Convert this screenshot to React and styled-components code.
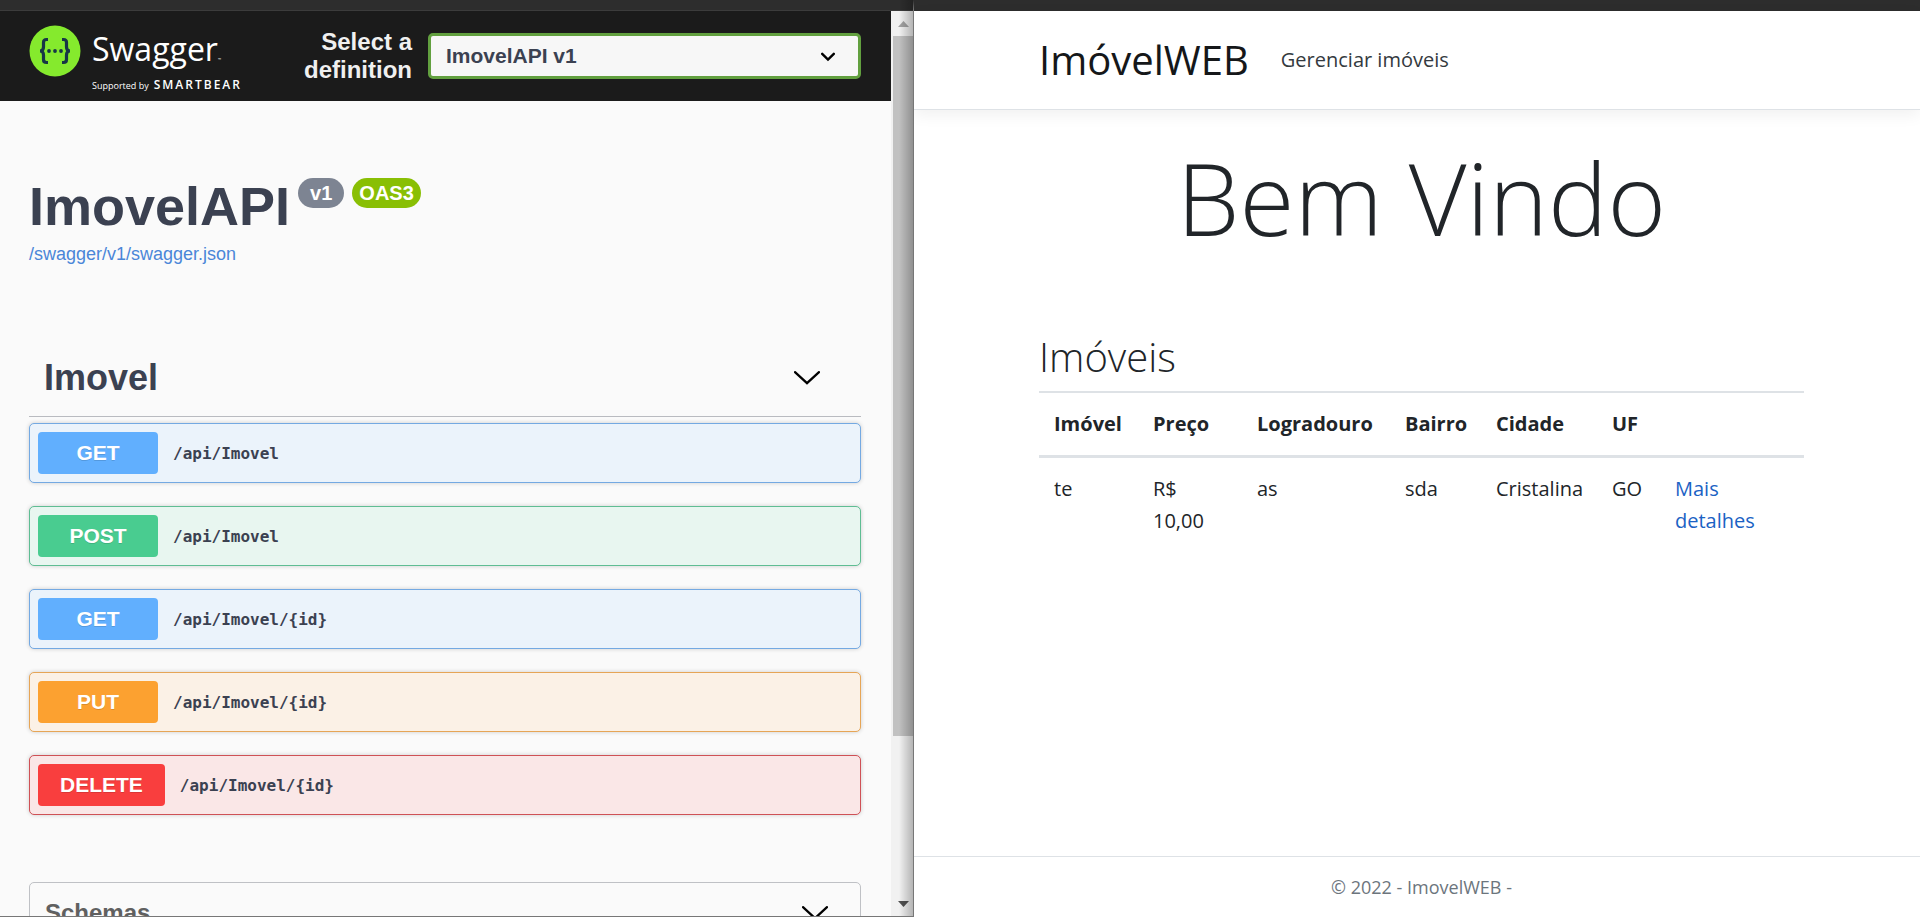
import React from "react";
import styled, { createGlobalStyle } from "styled-components";

const GlobalStyle = createGlobalStyle`
  * { box-sizing: border-box; }
  body { margin: 0; background: #fff; }
  button, select { font: inherit; color: inherit; }
`;

const sans = `"Liberation Sans", Arial, sans-serif`;
const humanist = `"Segoe UI", "Open Sans", "Noto Sans", sans-serif`;
const mono = `Consolas, "DejaVu Sans Mono", monospace`;

const Desktop = styled.div`
  display: grid;
  grid-template-columns: 914fr 1006fr;
  height: 100vh;
  overflow: hidden;
`;

const Window = styled.section`
  display: flex;
  flex-direction: column;
  min-width: 0;
  min-height: 0;
  border-top: ${(p) => p.$frame}px solid #2d2d2d;
`;

/* API window */

const ApiWindow = styled(Window)`
  position: relative;
  border-right: 1px solid #777;
  border-bottom: 1px solid #777;
  font-family: ${sans};
  color: #3b4151;

  &::after {
    content: "";
    position: absolute;
    inset: -10px 0 0 auto;
    width: 14px;
    background: linear-gradient(90deg, transparent, rgba(0, 0, 0, 0.25));
    pointer-events: none;
  }
`;

const ApiBody = styled.div`
  display: flex;
  flex: 1;
  min-height: 0;
  border-top: 1px solid #3c3c3c;
`;

const ApiPage = styled.main`
  flex: 1;
  min-width: 0;
  overflow: hidden;
  background: #fafafa;
`;

const Topbar = styled.header`
  display: flex;
  align-items: center;
  justify-content: space-between;
  height: 90px;
  padding: 0 30px 0 29px;
  background: #1b1b1b;
`;

const Brand = styled.a`
  display: flex;
  gap: 11px;
  color: #fff;
  text-decoration: none;
  font-family: "Open Sans", sans-serif;
`;

const BrandText = styled.span`
  display: flex;
  flex-direction: column;
  padding-top: 6px;
`;

const BrandName = styled.span`
  font-size: 32px;
  line-height: 36px;

  small { font-size: 4px; }
`;

const BrandBy = styled.span`
  display: flex;
  align-items: baseline;
  gap: 5px;
  font-size: 9px;
  line-height: 16px;
  height: 10px;

  strong {
    font-size: 12px;
    font-weight: 600;
    letter-spacing: 2px;
    line-height: 12px;
  }
`;

const Definition = styled.label`
  display: flex;
  align-items: center;
  gap: 16px;
  font-size: 24px;
  font-weight: 700;
  line-height: 28px;
  color: #f0f0f0;
  text-align: right;

  > span:first-child { width: 120px; }
`;

const SelectBox = styled.span`
  position: relative;
  width: 433px;

  svg {
    position: absolute;
    right: 26px;
    top: 19px;
    pointer-events: none;
  }
`;

const Select = styled.select`
  display: block;
  width: 100%;
  height: 46px;
  padding: 0 15px;
  border: 3px solid #62a03f;
  border-radius: 5px;
  background: #f7f7f7;
  appearance: none;
  font-size: 21px;
  font-weight: 700;
  color: #3b4151;
`;

const Info = styled.section`
  padding: 77px 29px 0;
`;

const TitleRow = styled.div`
  display: flex;
  align-items: flex-start;
  gap: 8px;
`;

const ApiTitle = styled.h1`
  margin: 0;
  padding-bottom: 6px;
  font-size: 54px;
  line-height: 56px;
`;

const Badge = styled.span`
  padding: 0 ${(p) => p.$pad}px;
  border-radius: 15px;
  background: ${(p) => p.$color};
  color: #fff;
  font-size: 20px;
  font-weight: 700;
  line-height: 30px;
`;

const SpecLink = styled.a`
  display: block;
  color: #4a86d8;
  font-size: 18px;
  line-height: 28px;
  text-decoration: none;
`;

const Operations = styled.section`
  padding: 71px 30px 0 29px;
`;

const TagHeading = styled.h2`
  margin: 0 0 6px;
  border-bottom: 1px solid #b9bbc0;
`;

const TagButton = styled.button`
  display: flex;
  align-items: center;
  justify-content: space-between;
  width: 100%;
  height: 77px;
  padding: 0 41px 0 15px;
  border: 0;
  background: none;
  font-size: 36px;
  font-weight: 700;
`;

const OperationList = styled.div`
  display: flex;
  flex-direction: column;
  gap: 23px;
`;

const palette = {
  GET: ["#61affe", "#ebf3fb", "#74a9e2"],
  POST: ["#49cc90", "#e8f6f0", "#5fbd93"],
  PUT: ["#fca130", "#fbf1e6", "#e6a556"],
  DELETE: ["#f93e3e", "#fae7e7", "#cf5156"],
};

const Operation = styled.button`
  display: flex;
  align-items: center;
  gap: 15px;
  height: 60px;
  padding: 0 8px;
  border: 1px solid ${(p) => palette[p.$method][2]};
  border-radius: 5px;
  background: ${(p) => palette[p.$method][1]};
  box-shadow: 0 0 4px rgba(0, 0, 0, 0.19);
  text-align: left;
`;

const Method = styled.span`
  min-width: 120px;
  padding: 0 22px;
  border-radius: 4px;
  background: ${(p) => palette[p.$method][0]};
  color: #fff;
  font-size: 21px;
  font-weight: 700;
  line-height: 42px;
  text-align: center;
  text-shadow: 0 1px 0 rgba(0, 0, 0, 0.15);
`;

const Path = styled.span`
  font-family: ${mono};
  font-size: 16px;
  font-weight: 700;
`;

const Schemas = styled.section`
  margin: 67px 30px 0 29px;
  border: 1px solid #bfc1c5;
  border-radius: 5px;
`;

const SchemasButton = styled.button`
  display: flex;
  align-items: center;
  justify-content: space-between;
  width: 100%;
  height: 60px;
  padding: 0 32px 0 15px;
  border: 0;
  background: none;
  color: #606060;
  font-size: 24px;
  font-weight: 700;
`;

const Scrollbar = styled.div`
  display: flex;
  flex-direction: column;
  align-items: center;
  width: 22px;
  padding: 10px 0 9px 2px;
  background: #f1f1f1;
`;

const Thumb = styled.div`
  width: 100%;
  height: 79%;
  margin: 9px 0 auto;
  background: #c1c1c1;
`;

/* Site window */

const SiteWindow = styled(Window)`
  background: #fff;
  font-family: ${humanist};
  font-size: 20px;
  line-height: 32px;
  color: #212529;
`;

const Navbar = styled.header`
  display: flex;
  align-items: center;
  gap: 32px;
  height: 99px;
  padding: 0 116px 0 125px;
  border-bottom: 1px solid #dee2e6;
  box-shadow: 0 5px 15px rgba(0, 0, 0, 0.06);
`;

const SiteBrand = styled.a`
  color: #151719;
  font-size: 40px;
  line-height: 60px;
  text-decoration: none;
`;

const NavLink = styled.a`
  color: #343a40;
  text-decoration: none;
`;

const SiteMain = styled.main`
  flex: 1;
  padding: 24px 116px 0 125px;
`;

const Welcome = styled.h1`
  margin: 0 0 70px;
  font-size: 100px;
  font-weight: 300;
  line-height: 126px;
  text-align: center;
`;

const ListHeading = styled.h2`
  margin: 0 0 7px;
  font-size: 40px;
  font-weight: 300;
  line-height: 54px;
`;

const Table = styled.table`
  width: 100%;
  table-layout: fixed;
  border-collapse: collapse;
  text-align: left;

  th, td {
    padding: 15px;
    vertical-align: top;
  }

  th {
    border-top: 2px solid #dee2e6;
    border-bottom: 3px solid #dee2e6;
    white-space: nowrap;
  }
`;

const Col = styled.col`
  width: ${(p) => p.$width}px;
`;

const DetailsLink = styled.a`
  color: #1b62c4;
  text-decoration: none;
`;

const Footer = styled.footer`
  padding: 0 116px 0 125px;
  border-top: 1px solid #dee2e6;
  color: #6c757d;
  font-size: 18px;
  line-height: 60px;
  text-align: center;
`;

const SwaggerMark = () => (
  <svg width="52" height="52" viewBox="0 0 51 52" aria-hidden="true">
    <circle cx="25.5" cy="26" r="25.5" fill="#85ea2d" />
    <g fill="none" stroke="#173647" strokeWidth="3.2">
      <path d="M18.5 14.5h-1.5q-3 0-3 3v4.5q0 4-3.5 4q3.5 0 3.5 4v4.5q0 3 3 3h1.5" />
      <path d="M32.5 14.5h1.5q3 0 3 3v4.5q0 4 3.5 4q-3.5 0-3.5 4v4.5q0 3-3 3h-1.5" />
    </g>
    <g fill="#173647">
      <circle cx="19.5" cy="26" r="1.9" />
      <circle cx="25.5" cy="26" r="1.9" />
      <circle cx="31.5" cy="26" r="1.9" />
    </g>
  </svg>
);

const Chevron = () => (
  <svg width="26" height="14" viewBox="0 0 26 14" fill="none" stroke="#000" strokeWidth="2.3" aria-hidden="true">
    <path d="M1 1.200 13 12.200 25 1.200" strokeLinecap="round" />
  </svg>
);

const SelectArrow = () => (
  <svg width="14" height="10" viewBox="0 0 14 10" fill="none" stroke="#000" strokeWidth="2.4" aria-hidden="true">
    <path d="M1.200 1.800 7 7.600 12.800 1.800" strokeLinecap="round" />
  </svg>
);

const ScrollArrow = ({ down }) => (
  <svg width="11" height="6" viewBox="0 0 11 6" aria-hidden="true">
    <path d={down ? "M0 0h11L5.5 6z" : "M0 6h11L5.5 0z"} fill={down ? "#505050" : "#a3a3a3"} />
  </svg>
);

const operations = [
  ["GET", "/api/Imovel"],
  ["POST", "/api/Imovel"],
  ["GET", "/api/Imovel/{id}"],
  ["PUT", "/api/Imovel/{id}"],
  ["DELETE", "/api/Imovel/{id}"],
];

const columns = [
  ["Imóvel", 99],
  ["Preço", 104],
  ["Logradouro", 148],
  ["Bairro", 91],
  ["Cidade", 116],
  ["UF", 63],
];

export default function App() {
  return (
    <>
      <GlobalStyle />
      <Desktop>
        <ApiWindow $frame={10}>
          <ApiBody>
            <ApiPage>
              <Topbar>
                <Brand href="#">
                  <SwaggerMark />
                  <BrandText>
                    <BrandName>Swagger<small>™</small></BrandName>
                    <BrandBy>Supported by <strong>SMARTBEAR</strong></BrandBy>
                  </BrandText>
                </Brand>
                <Definition htmlFor="definition">
                  <span>Select a definition</span>
                  <SelectBox>
                    <Select id="definition" defaultValue="v1">
                      <option value="v1">ImovelAPI v1</option>
                    </Select>
                    <SelectArrow />
                  </SelectBox>
                </Definition>
              </Topbar>
              <Info>
                <TitleRow>
                  <ApiTitle>ImovelAPI</ApiTitle>
                  <Badge $color="#7d8492" $pad={12}>v1</Badge>
                  <Badge $color="#89bf04" $pad={7}>OAS3</Badge>
                </TitleRow>
                <SpecLink href="#">/swagger/v1/swagger.json</SpecLink>
              </Info>
              <Operations>
                <TagHeading>
                  <TagButton type="button">
                    Imovel
                    <Chevron />
                  </TagButton>
                </TagHeading>
                <OperationList>
                  {operations.map(([method, path]) => (
                    <Operation type="button" key={method + path} $method={method}>
                      <Method $method={method}>{method}</Method>
                      <Path>{path}</Path>
                    </Operation>
                  ))}
                </OperationList>
              </Operations>
              <Schemas>
                <SchemasButton type="button">
                  Schemas
                  <Chevron />
                </SchemasButton>
              </Schemas>
            </ApiPage>
            <Scrollbar>
              <ScrollArrow />
              <Thumb />
              <ScrollArrow down />
            </Scrollbar>
          </ApiBody>
        </ApiWindow>
        <SiteWindow $frame={11}>
          <Navbar>
            <SiteBrand href="#">ImóvelWEB</SiteBrand>
            <NavLink href="#">Gerenciar imóveis</NavLink>
          </Navbar>
          <SiteMain>
            <Welcome>Bem Vindo</Welcome>
            <ListHeading>Imóveis</ListHeading>
            <Table>
              <colgroup>
                {columns.map(([name, width]) => (
                  <Col key={name} $width={width} />
                ))}
                <col />
              </colgroup>
              <thead>
                <tr>
                  {columns.map(([name]) => (
                    <th key={name} scope="col">{name}</th>
                  ))}
                  <th aria-label="Detalhes" />
                </tr>
              </thead>
              <tbody>
                <tr>
                  <td>te</td>
                  <td>R$ 10,00</td>
                  <td>as</td>
                  <td>sda</td>
                  <td>Cristalina</td>
                  <td>GO</td>
                  <td><DetailsLink href="#">Mais detalhes</DetailsLink></td>
                </tr>
              </tbody>
            </Table>
          </SiteMain>
          <Footer>© 2022 - ImovelWEB -</Footer>
        </SiteWindow>
      </Desktop>
    </>
  );
}
